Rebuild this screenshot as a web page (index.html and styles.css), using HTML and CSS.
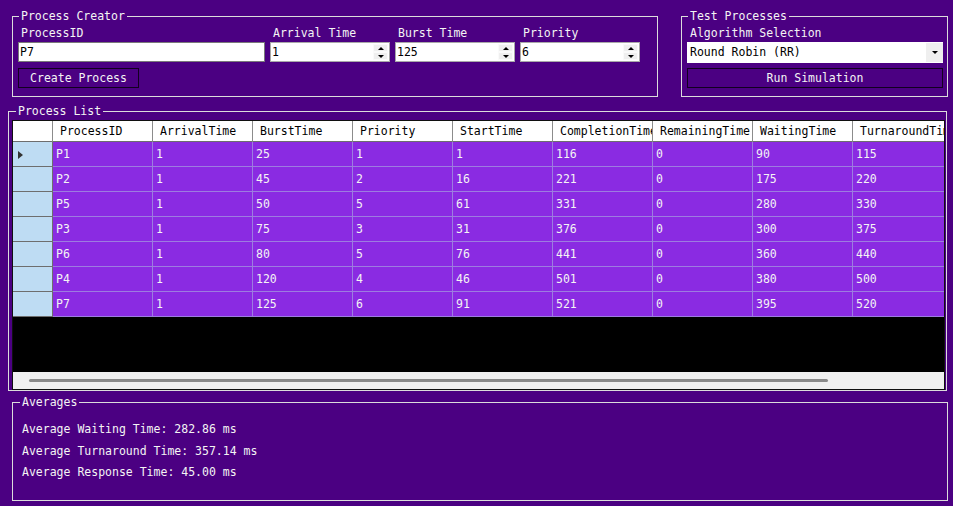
FILE: index.html
```html
<!DOCTYPE html>
<html lang="en">
<head>
    <meta charset="UTF-8">
    <meta name="viewport" content="width=device-width, initial-scale=1.0">
    <title>Process Scheduler</title>
    <link rel="stylesheet" href="styles.css">
</head>
<body>
    <div class="top-row">
        <fieldset class="group creator">
            <legend>Process Creator</legend>
            <div class="fields">
                <label class="field-label" for="pid">ProcessID</label>
                <label class="field-label" for="arrival">Arrival Time</label>
                <label class="field-label" for="burst">Burst Time</label>
                <label class="field-label" for="priority">Priority</label>
                <input type="text" id="pid" class="text-box" value="P7">
                <div class="spin">
                    <input type="text" id="arrival" value="1">
                    <div class="spin-btns"><span class="up"></span><span class="down"></span></div>
                </div>
                <div class="spin">
                    <input type="text" id="burst" value="125">
                    <div class="spin-btns"><span class="up"></span><span class="down"></span></div>
                </div>
                <div class="spin">
                    <input type="text" id="priority" value="6">
                    <div class="spin-btns"><span class="up"></span><span class="down"></span></div>
                </div>
            </div>
            <button class="btn create-btn">Create Process</button>
        </fieldset>

        <fieldset class="group tester">
            <legend>Test Processes</legend>
            <div class="field-label">Algorithm Selection</div>
            <div class="combo">
                <span class="combo-text">Round Robin (RR)</span>
                <span class="combo-arrow"></span>
            </div>
            <button class="btn run-btn">Run Simulation</button>
        </fieldset>
    </div>

    <fieldset class="group process-list">
        <legend>Process List</legend>
        <div class="grid">
            <div class="grid-body">
                <table class="data-table">
                    <colgroup>
                        <col class="col-rowhead">
                        <col><col><col><col><col><col><col><col><col>
                    </colgroup>
                    <thead>
                        <tr>
                            <th class="corner"></th>
                            <th>ProcessID</th>
                            <th>ArrivalTime</th>
                            <th>BurstTime</th>
                            <th>Priority</th>
                            <th>StartTime</th>
                            <th>CompletionTime</th>
                            <th>RemainingTime</th>
                            <th>WaitingTime</th>
                            <th>TurnaroundTime</th>
                        </tr>
                    </thead>
                    <tbody>
                        <tr><td class="rowhead"><span class="current"></span></td><td>P1</td><td>1</td><td>25</td><td>1</td><td>1</td><td>116</td><td>0</td><td>90</td><td>115</td></tr>
                        <tr><td class="rowhead"></td><td>P2</td><td>1</td><td>45</td><td>2</td><td>16</td><td>221</td><td>0</td><td>175</td><td>220</td></tr>
                        <tr><td class="rowhead"></td><td>P5</td><td>1</td><td>50</td><td>5</td><td>61</td><td>331</td><td>0</td><td>280</td><td>330</td></tr>
                        <tr><td class="rowhead"></td><td>P3</td><td>1</td><td>75</td><td>3</td><td>31</td><td>376</td><td>0</td><td>300</td><td>375</td></tr>
                        <tr><td class="rowhead"></td><td>P6</td><td>1</td><td>80</td><td>5</td><td>76</td><td>441</td><td>0</td><td>360</td><td>440</td></tr>
                        <tr><td class="rowhead"></td><td>P4</td><td>1</td><td>120</td><td>4</td><td>46</td><td>501</td><td>0</td><td>380</td><td>500</td></tr>
                        <tr><td class="rowhead"></td><td>P7</td><td>1</td><td>125</td><td>6</td><td>91</td><td>521</td><td>0</td><td>395</td><td>520</td></tr>
                    </tbody>
                </table>
            </div>
            <div class="hscroll"><div class="hscroll-thumb"></div></div>
        </div>
    </fieldset>

    <fieldset class="group averages">
        <legend>Averages</legend>
        <p>Average Waiting Time: 282.86 ms</p>
        <p>Average Turnaround Time: 357.14 ms</p>
        <p>Average Response Time: 45.00 ms</p>
    </fieldset>
</body>
</html>
```

FILE: styles.css
```css
* {
    box-sizing: border-box;
}
body {
    margin: 0;
    background-color: #4b0082;
    color: #f4f4f4;
    font-family: "DejaVu Sans Mono", monospace;
    font-size: 11.5px;
    line-height: 14px;
}
.group {
    margin: 0;
    min-width: 0;
    border: 1px solid #dcdcdc;
}
.group legend {
    padding: 0 2px;
    margin-left: 1px;
    line-height: 14px;
}

/* top row */
.top-row {
    display: flex;
    gap: 23px;
    margin: 9px 0 0 12px;
}
.creator {
    width: 646px;
    padding: 4px 5px 8px 5px;
}
.tester {
    width: 267px;
    padding: 4px 4px 8px 5px;
}
.fields {
    display: grid;
    grid-template-columns: 247px 120px 120px 120px;
    column-gap: 5px;
    row-gap: 3px;
}
.field-label {
    display: block;
    padding-left: 3px;
    line-height: 12px;
}
.text-box {
    width: 100%;
    height: 20px;
    margin: 0;
    padding: 0 1px;
    border: 1px solid #7a7a7a;
    background-color: white;
    color: black;
    font: inherit;
    outline: none;
}
.spin {
    display: flex;
    height: 20px;
    border: 1px solid #a9a9a9;
    background-color: white;
}
.spin input {
    flex: 1;
    min-width: 0;
    margin: 0;
    padding: 0 1px;
    border: none;
    background: transparent;
    color: black;
    font: inherit;
    outline: none;
}
.spin-btns {
    display: flex;
    flex-direction: column;
    width: 15px;
    margin: 1px 1px 1px 0;
}
.spin-btns span {
    flex: 1;
    display: flex;
    align-items: center;
    justify-content: center;
    background-color: #efefef;
    border: 1px solid #fafafa;
}
.spin-btns .up::before {
    content: "";
    border-left: 3px solid transparent;
    border-right: 3px solid transparent;
    border-bottom: 3px solid black;
}
.spin-btns .down::before {
    content: "";
    border-left: 3px solid transparent;
    border-right: 3px solid transparent;
    border-top: 3px solid black;
}
.btn {
    display: block;
    height: 20px;
    padding: 0;
    border: 1px solid #12001f;
    background-color: #4b0082;
    color: #f4f4f4;
    font: inherit;
    cursor: pointer;
}
.create-btn {
    width: 121px;
    margin-top: 6px;
}
.run-btn {
    width: 100%;
    margin-top: 5px;
}
.combo {
    display: flex;
    height: 21px;
    margin-top: 3px;
    background-color: white;
    color: black;
}
.combo-text {
    flex: 1;
    padding-left: 3px;
    line-height: 21px;
}
.combo-arrow {
    display: flex;
    align-items: center;
    justify-content: center;
    width: 17px;
    margin: 1px 0;
    background-color: #efefef;
}
.combo-arrow::before {
    content: "";
    border-left: 3px solid transparent;
    border-right: 3px solid transparent;
    border-top: 3px solid black;
}

/* process list */
.process-list {
    width: 939px;
    margin: 7px 0 0 8px;
    padding: 2px 1px 0 3px;
}
.process-list legend {
    margin-left: 4px;
}
.grid {
    display: flex;
    flex-direction: column;
    height: 270px;
    border: 1px solid #101010;
    background-color: black;
}
.grid-body {
    flex: 1;
    overflow: hidden;
}
.data-table {
    width: 940px;
    table-layout: fixed;
    border-collapse: separate;
    border-spacing: 0;
}
.data-table col {
    width: 100px;
}
.data-table .col-rowhead {
    width: 40px;
}
.data-table th {
    padding: 3px 0 3px 7px;
    background-color: white;
    color: black;
    font-weight: normal;
    text-align: left;
    white-space: nowrap;
    overflow: hidden;
    border-right: 1px solid #8c8c8c;
    border-bottom: 1px solid #6e6e6e;
}
.data-table td {
    padding: 5px 0 5px 3px;
    background-color: #8a2be2;
    color: #f4f4f4;
    white-space: nowrap;
    overflow: hidden;
    border-right: 1px solid #9d7ce0;
    border-bottom: 1px solid #9d7ce0;
}
.data-table td.rowhead {
    padding-left: 5px;
    background-color: #bedcf3;
    border-right-color: #6e6e6e;
    border-bottom-color: #6e6e6e;
}
.current {
    display: inline-block;
    vertical-align: middle;
    border-left: 5px solid #333333;
    border-top: 4px solid transparent;
    border-bottom: 4px solid transparent;
}
.hscroll {
    height: 17px;
    padding: 7px 0 0 16px;
    background-color: #f0f0f0;
}
.hscroll-thumb {
    width: 799px;
    height: 3px;
    border-radius: 2px;
    background-color: #8a8a8a;
}

/* averages */
.averages {
    width: 936px;
    margin: 4px 0 0 12px;
    padding: 10px 0 16px 9px;
}
.averages legend {
    margin-left: -2px;
}
.averages p {
    margin: 0;
    line-height: 21.5px;
}
```
